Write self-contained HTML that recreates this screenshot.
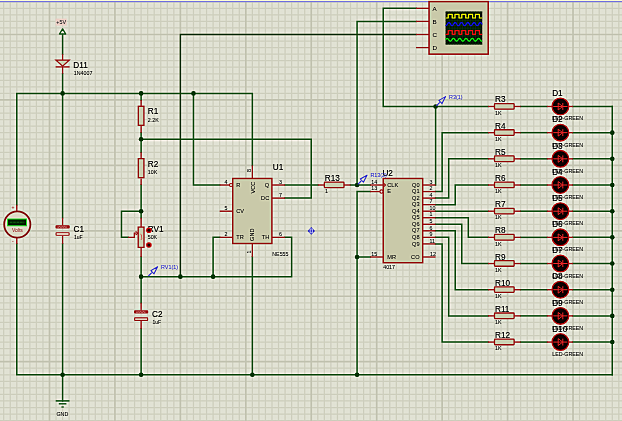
<!DOCTYPE html>
<html><head><meta charset="utf-8"><style>
html,body{margin:0;padding:0;background:#e0e1d3;}
svg{display:block;}
text{font-family:"Liberation Sans", sans-serif;}
.t{opacity:0.999;will-change:transform;}
</style></head><body>
<svg width="622" height="421" viewBox="0 0 622 421" style="will-change:transform">
<defs><filter id="usm" filterUnits="userSpaceOnUse" x="-20" y="-20" width="662" height="461" color-interpolation-filters="sRGB">
<feGaussianBlur in="SourceGraphic" stdDeviation="0.8" result="b"/>
<feComposite in="SourceGraphic" in2="b" operator="arithmetic" k1="0" k2="1.6" k3="-0.6" k4="0"/>
</filter></defs>
<g filter="url(#usm)">
<rect x="-20" y="-20" width="662" height="461" fill="#e0e1d3"/>
<path d="M-35.57 -20V441M-29.03 -20V441M-22.48 -20V441M-9.4 -20V441M-2.85 -20V441M3.69 -20V441M10.24 -20V441M16.78 -20V441M23.32 -20V441M29.87 -20V441M36.41 -20V441M42.96 -20V441M56.04 -20V441M62.59 -20V441M69.13 -20V441M75.68 -20V441M82.22 -20V441M88.76 -20V441M95.31 -20V441M101.85 -20V441M108.4 -20V441M121.48 -20V441M128.03 -20V441M134.57 -20V441M141.12 -20V441M147.66 -20V441M154.2 -20V441M160.75 -20V441M167.29 -20V441M173.84 -20V441M186.92 -20V441M193.47 -20V441M200.01 -20V441M206.56 -20V441M213.1 -20V441M219.64 -20V441M226.19 -20V441M232.73 -20V441M239.28 -20V441M252.36 -20V441M258.91 -20V441M265.45 -20V441M272 -20V441M278.54 -20V441M285.08 -20V441M291.63 -20V441M298.17 -20V441M304.72 -20V441M317.8 -20V441M324.35 -20V441M330.89 -20V441M337.44 -20V441M343.98 -20V441M350.52 -20V441M357.07 -20V441M363.61 -20V441M370.16 -20V441M383.24 -20V441M389.79 -20V441M396.33 -20V441M402.88 -20V441M409.42 -20V441M415.96 -20V441M422.51 -20V441M429.05 -20V441M435.6 -20V441M448.68 -20V441M455.23 -20V441M461.77 -20V441M468.32 -20V441M474.86 -20V441M481.4 -20V441M487.95 -20V441M494.49 -20V441M501.04 -20V441M514.12 -20V441M520.67 -20V441M527.21 -20V441M533.76 -20V441M540.3 -20V441M546.84 -20V441M553.39 -20V441M559.93 -20V441M566.48 -20V441M579.56 -20V441M586.11 -20V441M592.65 -20V441M599.2 -20V441M605.74 -20V441M612.28 -20V441M618.83 -20V441M625.37 -20V441M631.92 -20V441M-20 -37.48H642M-20 -24.4H642M-20 -17.85H642M-20 -11.31H642M-20 -4.76H642M-20 1.78H642M-20 8.32H642M-20 14.87H642M-20 21.41H642M-20 27.96H642M-20 41.04H642M-20 47.59H642M-20 54.13H642M-20 60.68H642M-20 67.22H642M-20 73.76H642M-20 80.31H642M-20 86.85H642M-20 93.4H642M-20 106.48H642M-20 113.03H642M-20 119.57H642M-20 126.12H642M-20 132.66H642M-20 139.2H642M-20 145.75H642M-20 152.29H642M-20 158.84H642M-20 171.92H642M-20 178.47H642M-20 185.01H642M-20 191.56H642M-20 198.1H642M-20 204.64H642M-20 211.19H642M-20 217.73H642M-20 224.28H642M-20 237.36H642M-20 243.91H642M-20 250.45H642M-20 257H642M-20 263.54H642M-20 270.08H642M-20 276.63H642M-20 283.17H642M-20 289.72H642M-20 302.8H642M-20 309.35H642M-20 315.89H642M-20 322.44H642M-20 328.98H642M-20 335.52H642M-20 342.07H642M-20 348.61H642M-20 355.16H642M-20 368.24H642M-20 374.79H642M-20 381.33H642M-20 387.88H642M-20 394.42H642M-20 400.96H642M-20 407.51H642M-20 414.05H642M-20 420.6H642M-20 433.68H642M-20 440.23H642" stroke="#d0d1c0" stroke-width="1.25" fill="none"/>
<path d="M49.5 -20V441M-20 34.5H642M114.94 -20V441M-20 99.94H642M180.38 -20V441M-20 165.38H642M245.82 -20V441M-20 230.82H642M311.26 -20V441M-20 296.26H642M376.7 -20V441M-20 361.7H642M442.14 -20V441M507.58 -20V441M573.02 -20V441" stroke="#c5c6b4" stroke-width="1.7" fill="none"/>
<rect x="-20" y="-20" width="662" height="21" fill="#eeeed6"/>
<rect x="-20" y="1" width="662" height="1.2" fill="#8c8cdc"/>
<path d="M16.78 204.64 L16.78 93.4 L252.36 93.4 L252.36 165.38" stroke="#2c642c" stroke-width="1.5" fill="none" stroke-linejoin="miter" stroke-linecap="square"/>
<path d="M16.78 243.91 L16.78 374.79 L612.28 374.79" stroke="#2c642c" stroke-width="1.5" fill="none" stroke-linejoin="miter" stroke-linecap="square"/>
<path d="M62.59 34.5 L62.59 54.13" stroke="#2c642c" stroke-width="1.5" fill="none" stroke-linejoin="miter" stroke-linecap="square"/>
<path d="M62.59 73.76 L62.59 217.73" stroke="#2c642c" stroke-width="1.5" fill="none" stroke-linejoin="miter" stroke-linecap="square"/>
<path d="M62.59 243.91 L62.59 400.96" stroke="#2c642c" stroke-width="1.5" fill="none" stroke-linejoin="miter" stroke-linecap="square"/>
<path d="M141.12 93.4 L141.12 99.94" stroke="#2c642c" stroke-width="1.5" fill="none" stroke-linejoin="miter" stroke-linecap="square"/>
<path d="M141.12 132.66 L141.12 152.29" stroke="#2c642c" stroke-width="1.5" fill="none" stroke-linejoin="miter" stroke-linecap="square"/>
<path d="M141.12 185.01 L141.12 217.73" stroke="#2c642c" stroke-width="1.5" fill="none" stroke-linejoin="miter" stroke-linecap="square"/>
<path d="M141.12 257 L141.12 302.8" stroke="#2c642c" stroke-width="1.5" fill="none" stroke-linejoin="miter" stroke-linecap="square"/>
<path d="M141.12 328.98 L141.12 374.79" stroke="#2c642c" stroke-width="1.5" fill="none" stroke-linejoin="miter" stroke-linecap="square"/>
<path d="M141.12 139.2 L311.26 139.2 L311.26 198.1 L285.08 198.1" stroke="#2c642c" stroke-width="1.5" fill="none" stroke-linejoin="miter" stroke-linecap="square"/>
<path d="M193.47 93.4 L193.47 185.01 L219.64 185.01" stroke="#2c642c" stroke-width="1.5" fill="none" stroke-linejoin="miter" stroke-linecap="square"/>
<path d="M141.12 211.19 L121.48 211.19 L121.48 237.36 L128.03 237.36" stroke="#2c642c" stroke-width="1.5" fill="none" stroke-linejoin="miter" stroke-linecap="square"/>
<path d="M141.12 276.63 L291.63 276.63 L291.63 237.36 L285.08 237.36" stroke="#2c642c" stroke-width="1.5" fill="none" stroke-linejoin="miter" stroke-linecap="square"/>
<path d="M219.64 237.36 L213.1 237.36 L213.1 276.63" stroke="#2c642c" stroke-width="1.5" fill="none" stroke-linejoin="miter" stroke-linecap="square"/>
<path d="M252.36 257 L252.36 374.79" stroke="#2c642c" stroke-width="1.5" fill="none" stroke-linejoin="miter" stroke-linecap="square"/>
<path d="M285.08 185.01 L317.8 185.01" stroke="#2c642c" stroke-width="1.5" fill="none" stroke-linejoin="miter" stroke-linecap="square"/>
<path d="M350.52 185.01 L370.16 185.01" stroke="#2c642c" stroke-width="1.5" fill="none" stroke-linejoin="miter" stroke-linecap="square"/>
<path d="M415.96 21.41 L357.07 21.41 L357.07 185.01" stroke="#2c642c" stroke-width="1.5" fill="none" stroke-linejoin="miter" stroke-linecap="square"/>
<path d="M370.16 191.56 L357.07 191.56 L357.07 374.79" stroke="#2c642c" stroke-width="1.5" fill="none" stroke-linejoin="miter" stroke-linecap="square"/>
<path d="M357.07 257 L370.16 257" stroke="#2c642c" stroke-width="1.5" fill="none" stroke-linejoin="miter" stroke-linecap="square"/>
<path d="M415.96 8.32 L383.24 8.32 L383.24 106.48 L487.95 106.48" stroke="#2c642c" stroke-width="1.5" fill="none" stroke-linejoin="miter" stroke-linecap="square"/>
<path d="M435.6 185.01 L435.6 106.48" stroke="#2c642c" stroke-width="1.5" fill="none" stroke-linejoin="miter" stroke-linecap="square"/>
<path d="M435.6 191.56 L442.14 191.56 L442.14 132.66 L487.95 132.66" stroke="#2c642c" stroke-width="1.5" fill="none" stroke-linejoin="miter" stroke-linecap="square"/>
<path d="M435.6 198.1 L448.68 198.1 L448.68 158.84 L487.95 158.84" stroke="#2c642c" stroke-width="1.5" fill="none" stroke-linejoin="miter" stroke-linecap="square"/>
<path d="M435.6 204.64 L455.23 204.64 L455.23 185.01 L487.95 185.01" stroke="#2c642c" stroke-width="1.5" fill="none" stroke-linejoin="miter" stroke-linecap="square"/>
<path d="M435.6 211.19 L487.95 211.19" stroke="#2c642c" stroke-width="1.5" fill="none" stroke-linejoin="miter" stroke-linecap="square"/>
<path d="M435.6 217.73 L468.32 217.73 L468.32 237.36 L487.95 237.36" stroke="#2c642c" stroke-width="1.5" fill="none" stroke-linejoin="miter" stroke-linecap="square"/>
<path d="M435.6 224.28 L461.77 224.28 L461.77 263.54 L487.95 263.54" stroke="#2c642c" stroke-width="1.5" fill="none" stroke-linejoin="miter" stroke-linecap="square"/>
<path d="M435.6 230.82 L455.23 230.82 L455.23 289.72 L487.95 289.72" stroke="#2c642c" stroke-width="1.5" fill="none" stroke-linejoin="miter" stroke-linecap="square"/>
<path d="M435.6 237.36 L448.68 237.36 L448.68 315.89 L487.95 315.89" stroke="#2c642c" stroke-width="1.5" fill="none" stroke-linejoin="miter" stroke-linecap="square"/>
<path d="M435.6 243.91 L442.14 243.91 L442.14 342.07 L487.95 342.07" stroke="#2c642c" stroke-width="1.5" fill="none" stroke-linejoin="miter" stroke-linecap="square"/>
<path d="M612.28 106.48 L612.28 374.79" stroke="#2c642c" stroke-width="1.5" fill="none" stroke-linejoin="miter" stroke-linecap="square"/>
<path d="M520.67 106.48 L546.84 106.48" stroke="#2c642c" stroke-width="1.5" fill="none" stroke-linejoin="miter" stroke-linecap="square"/>
<path d="M573.02 106.48 L612.28 106.48" stroke="#2c642c" stroke-width="1.5" fill="none" stroke-linejoin="miter" stroke-linecap="square"/>
<path d="M520.67 132.66 L546.84 132.66" stroke="#2c642c" stroke-width="1.5" fill="none" stroke-linejoin="miter" stroke-linecap="square"/>
<path d="M573.02 132.66 L612.28 132.66" stroke="#2c642c" stroke-width="1.5" fill="none" stroke-linejoin="miter" stroke-linecap="square"/>
<path d="M520.67 158.84 L546.84 158.84" stroke="#2c642c" stroke-width="1.5" fill="none" stroke-linejoin="miter" stroke-linecap="square"/>
<path d="M573.02 158.84 L612.28 158.84" stroke="#2c642c" stroke-width="1.5" fill="none" stroke-linejoin="miter" stroke-linecap="square"/>
<path d="M520.67 185.01 L546.84 185.01" stroke="#2c642c" stroke-width="1.5" fill="none" stroke-linejoin="miter" stroke-linecap="square"/>
<path d="M573.02 185.01 L612.28 185.01" stroke="#2c642c" stroke-width="1.5" fill="none" stroke-linejoin="miter" stroke-linecap="square"/>
<path d="M520.67 211.19 L546.84 211.19" stroke="#2c642c" stroke-width="1.5" fill="none" stroke-linejoin="miter" stroke-linecap="square"/>
<path d="M573.02 211.19 L612.28 211.19" stroke="#2c642c" stroke-width="1.5" fill="none" stroke-linejoin="miter" stroke-linecap="square"/>
<path d="M520.67 237.36 L546.84 237.36" stroke="#2c642c" stroke-width="1.5" fill="none" stroke-linejoin="miter" stroke-linecap="square"/>
<path d="M573.02 237.36 L612.28 237.36" stroke="#2c642c" stroke-width="1.5" fill="none" stroke-linejoin="miter" stroke-linecap="square"/>
<path d="M520.67 263.54 L546.84 263.54" stroke="#2c642c" stroke-width="1.5" fill="none" stroke-linejoin="miter" stroke-linecap="square"/>
<path d="M573.02 263.54 L612.28 263.54" stroke="#2c642c" stroke-width="1.5" fill="none" stroke-linejoin="miter" stroke-linecap="square"/>
<path d="M520.67 289.72 L546.84 289.72" stroke="#2c642c" stroke-width="1.5" fill="none" stroke-linejoin="miter" stroke-linecap="square"/>
<path d="M573.02 289.72 L612.28 289.72" stroke="#2c642c" stroke-width="1.5" fill="none" stroke-linejoin="miter" stroke-linecap="square"/>
<path d="M520.67 315.89 L546.84 315.89" stroke="#2c642c" stroke-width="1.5" fill="none" stroke-linejoin="miter" stroke-linecap="square"/>
<path d="M573.02 315.89 L612.28 315.89" stroke="#2c642c" stroke-width="1.5" fill="none" stroke-linejoin="miter" stroke-linecap="square"/>
<path d="M520.67 342.07 L546.84 342.07" stroke="#2c642c" stroke-width="1.5" fill="none" stroke-linejoin="miter" stroke-linecap="square"/>
<path d="M573.02 342.07 L612.28 342.07" stroke="#2c642c" stroke-width="1.5" fill="none" stroke-linejoin="miter" stroke-linecap="square"/>
<path d="M415.96 34.5 L180.38 34.5 L180.38 276.63" stroke="#2e4d16" stroke-width="1.45" fill="none" stroke-linejoin="miter" stroke-linecap="square"/>
<circle cx="62.59" cy="93.4" r="2.3" fill="#0f3f0f"/>
<circle cx="141.12" cy="93.4" r="2.3" fill="#0f3f0f"/>
<circle cx="193.47" cy="93.4" r="2.3" fill="#0f3f0f"/>
<circle cx="141.12" cy="139.2" r="2.3" fill="#0f3f0f"/>
<circle cx="141.12" cy="211.19" r="2.3" fill="#0f3f0f"/>
<circle cx="141.12" cy="276.63" r="2.3" fill="#0f3f0f"/>
<circle cx="180.38" cy="276.63" r="2.3" fill="#0f3f0f"/>
<circle cx="213.1" cy="276.63" r="2.3" fill="#0f3f0f"/>
<circle cx="357.07" cy="185.01" r="2.3" fill="#0f3f0f"/>
<circle cx="357.07" cy="257" r="2.3" fill="#0f3f0f"/>
<circle cx="435.6" cy="106.48" r="2.3" fill="#0f3f0f"/>
<circle cx="62.59" cy="374.79" r="2.3" fill="#0f3f0f"/>
<circle cx="141.12" cy="374.79" r="2.3" fill="#0f3f0f"/>
<circle cx="252.36" cy="374.79" r="2.3" fill="#0f3f0f"/>
<circle cx="357.07" cy="374.79" r="2.3" fill="#0f3f0f"/>
<circle cx="612.28" cy="132.66" r="2.3" fill="#0f3f0f"/>
<circle cx="612.28" cy="158.84" r="2.3" fill="#0f3f0f"/>
<circle cx="612.28" cy="185.01" r="2.3" fill="#0f3f0f"/>
<circle cx="612.28" cy="211.19" r="2.3" fill="#0f3f0f"/>
<circle cx="612.28" cy="237.36" r="2.3" fill="#0f3f0f"/>
<circle cx="612.28" cy="263.54" r="2.3" fill="#0f3f0f"/>
<circle cx="612.28" cy="289.72" r="2.3" fill="#0f3f0f"/>
<circle cx="612.28" cy="315.89" r="2.3" fill="#0f3f0f"/>
<circle cx="612.28" cy="342.07" r="2.3" fill="#0f3f0f"/>
<path d="M141.12 99.94 L141.12 106.48" stroke="#a02222" stroke-width="1.3" fill="none"/>
<path d="M141.12 126.12 L141.12 132.66" stroke="#a02222" stroke-width="1.3" fill="none"/>
<rect x="138.32" y="106.28" width="5.6" height="19.03" fill="#cacaad" stroke="#a02222" stroke-width="1.3"/>
<text x="147.72" y="114.28" font-size="8.2" fill="#1c1c1c" stroke="#1c1c1c" stroke-width="0.12" text-anchor="start">R1</text>
<text x="147.82" y="121.78" font-size="5.3" fill="#1c1c1c" stroke="#1c1c1c" stroke-width="0.05" text-anchor="start">2.2K</text>
<path d="M141.12 152.29 L141.12 158.84" stroke="#a02222" stroke-width="1.3" fill="none"/>
<path d="M141.12 178.47 L141.12 185.01" stroke="#a02222" stroke-width="1.3" fill="none"/>
<rect x="138.32" y="158.64" width="5.6" height="19.03" fill="#cacaad" stroke="#a02222" stroke-width="1.3"/>
<text x="147.72" y="166.64" font-size="8.2" fill="#1c1c1c" stroke="#1c1c1c" stroke-width="0.12" text-anchor="start">R2</text>
<text x="147.82" y="174.14" font-size="5.3" fill="#1c1c1c" stroke="#1c1c1c" stroke-width="0.05" text-anchor="start">10K</text>
<path d="M317.8 185.01 L324.35 185.01" stroke="#a02222" stroke-width="1.3" fill="none"/>
<path d="M343.98 185.01 L350.52 185.01" stroke="#a02222" stroke-width="1.3" fill="none"/>
<rect x="324.35" y="182.11" width="19.63" height="5.6" rx="0.8" fill="#cacaad" stroke="#a02222" stroke-width="1.3"/>
<text x="324.85" y="181.01" font-size="8.2" fill="#1c1c1c" stroke="#1c1c1c" stroke-width="0.12" text-anchor="start">R13</text>
<text x="324.95" y="193.31" font-size="5.3" fill="#1c1c1c" stroke="#1c1c1c" stroke-width="0.05" text-anchor="start">1</text>
<path d="M487.95 106.48 L494.49 106.48" stroke="#a02222" stroke-width="1.3" fill="none"/>
<path d="M514.12 106.48 L520.67 106.48" stroke="#a02222" stroke-width="1.3" fill="none"/>
<rect x="494.49" y="103.58" width="19.63" height="5.6" rx="0.8" fill="#cacaad" stroke="#a02222" stroke-width="1.3"/>
<text x="494.99" y="102.48" font-size="8.2" fill="#1c1c1c" stroke="#1c1c1c" stroke-width="0.12" text-anchor="start">R3</text>
<text x="495.09" y="114.78" font-size="5.3" fill="#1c1c1c" stroke="#1c1c1c" stroke-width="0.05" text-anchor="start">1K</text>
<path d="M487.95 132.66 L494.49 132.66" stroke="#a02222" stroke-width="1.3" fill="none"/>
<path d="M514.12 132.66 L520.67 132.66" stroke="#a02222" stroke-width="1.3" fill="none"/>
<rect x="494.49" y="129.76" width="19.63" height="5.6" rx="0.8" fill="#cacaad" stroke="#a02222" stroke-width="1.3"/>
<text x="494.99" y="128.66" font-size="8.2" fill="#1c1c1c" stroke="#1c1c1c" stroke-width="0.12" text-anchor="start">R4</text>
<text x="495.09" y="140.96" font-size="5.3" fill="#1c1c1c" stroke="#1c1c1c" stroke-width="0.05" text-anchor="start">1K</text>
<path d="M487.95 158.84 L494.49 158.84" stroke="#a02222" stroke-width="1.3" fill="none"/>
<path d="M514.12 158.84 L520.67 158.84" stroke="#a02222" stroke-width="1.3" fill="none"/>
<rect x="494.49" y="155.94" width="19.63" height="5.6" rx="0.8" fill="#cacaad" stroke="#a02222" stroke-width="1.3"/>
<text x="494.99" y="154.84" font-size="8.2" fill="#1c1c1c" stroke="#1c1c1c" stroke-width="0.12" text-anchor="start">R5</text>
<text x="495.09" y="167.14" font-size="5.3" fill="#1c1c1c" stroke="#1c1c1c" stroke-width="0.05" text-anchor="start">1K</text>
<path d="M487.95 185.01 L494.49 185.01" stroke="#a02222" stroke-width="1.3" fill="none"/>
<path d="M514.12 185.01 L520.67 185.01" stroke="#a02222" stroke-width="1.3" fill="none"/>
<rect x="494.49" y="182.11" width="19.63" height="5.6" rx="0.8" fill="#cacaad" stroke="#a02222" stroke-width="1.3"/>
<text x="494.99" y="181.01" font-size="8.2" fill="#1c1c1c" stroke="#1c1c1c" stroke-width="0.12" text-anchor="start">R6</text>
<text x="495.09" y="193.31" font-size="5.3" fill="#1c1c1c" stroke="#1c1c1c" stroke-width="0.05" text-anchor="start">1K</text>
<path d="M487.95 211.19 L494.49 211.19" stroke="#a02222" stroke-width="1.3" fill="none"/>
<path d="M514.12 211.19 L520.67 211.19" stroke="#a02222" stroke-width="1.3" fill="none"/>
<rect x="494.49" y="208.29" width="19.63" height="5.6" rx="0.8" fill="#cacaad" stroke="#a02222" stroke-width="1.3"/>
<text x="494.99" y="207.19" font-size="8.2" fill="#1c1c1c" stroke="#1c1c1c" stroke-width="0.12" text-anchor="start">R7</text>
<text x="495.09" y="219.49" font-size="5.3" fill="#1c1c1c" stroke="#1c1c1c" stroke-width="0.05" text-anchor="start">1K</text>
<path d="M487.95 237.36 L494.49 237.36" stroke="#a02222" stroke-width="1.3" fill="none"/>
<path d="M514.12 237.36 L520.67 237.36" stroke="#a02222" stroke-width="1.3" fill="none"/>
<rect x="494.49" y="234.46" width="19.63" height="5.6" rx="0.8" fill="#cacaad" stroke="#a02222" stroke-width="1.3"/>
<text x="494.99" y="233.36" font-size="8.2" fill="#1c1c1c" stroke="#1c1c1c" stroke-width="0.12" text-anchor="start">R8</text>
<text x="495.09" y="245.66" font-size="5.3" fill="#1c1c1c" stroke="#1c1c1c" stroke-width="0.05" text-anchor="start">1K</text>
<path d="M487.95 263.54 L494.49 263.54" stroke="#a02222" stroke-width="1.3" fill="none"/>
<path d="M514.12 263.54 L520.67 263.54" stroke="#a02222" stroke-width="1.3" fill="none"/>
<rect x="494.49" y="260.64" width="19.63" height="5.6" rx="0.8" fill="#cacaad" stroke="#a02222" stroke-width="1.3"/>
<text x="494.99" y="259.54" font-size="8.2" fill="#1c1c1c" stroke="#1c1c1c" stroke-width="0.12" text-anchor="start">R9</text>
<text x="495.09" y="271.84" font-size="5.3" fill="#1c1c1c" stroke="#1c1c1c" stroke-width="0.05" text-anchor="start">1K</text>
<path d="M487.95 289.72 L494.49 289.72" stroke="#a02222" stroke-width="1.3" fill="none"/>
<path d="M514.12 289.72 L520.67 289.72" stroke="#a02222" stroke-width="1.3" fill="none"/>
<rect x="494.49" y="286.82" width="19.63" height="5.6" rx="0.8" fill="#cacaad" stroke="#a02222" stroke-width="1.3"/>
<text x="494.99" y="285.72" font-size="8.2" fill="#1c1c1c" stroke="#1c1c1c" stroke-width="0.12" text-anchor="start">R10</text>
<text x="495.09" y="298.02" font-size="5.3" fill="#1c1c1c" stroke="#1c1c1c" stroke-width="0.05" text-anchor="start">1K</text>
<path d="M487.95 315.89 L494.49 315.89" stroke="#a02222" stroke-width="1.3" fill="none"/>
<path d="M514.12 315.89 L520.67 315.89" stroke="#a02222" stroke-width="1.3" fill="none"/>
<rect x="494.49" y="312.99" width="19.63" height="5.6" rx="0.8" fill="#cacaad" stroke="#a02222" stroke-width="1.3"/>
<text x="494.99" y="311.89" font-size="8.2" fill="#1c1c1c" stroke="#1c1c1c" stroke-width="0.12" text-anchor="start">R11</text>
<text x="495.09" y="324.19" font-size="5.3" fill="#1c1c1c" stroke="#1c1c1c" stroke-width="0.05" text-anchor="start">1K</text>
<path d="M487.95 342.07 L494.49 342.07" stroke="#a02222" stroke-width="1.3" fill="none"/>
<path d="M514.12 342.07 L520.67 342.07" stroke="#a02222" stroke-width="1.3" fill="none"/>
<rect x="494.49" y="339.17" width="19.63" height="5.6" rx="0.8" fill="#cacaad" stroke="#a02222" stroke-width="1.3"/>
<text x="494.99" y="338.07" font-size="8.2" fill="#1c1c1c" stroke="#1c1c1c" stroke-width="0.12" text-anchor="start">R12</text>
<text x="495.09" y="350.37" font-size="5.3" fill="#1c1c1c" stroke="#1c1c1c" stroke-width="0.05" text-anchor="start">1K</text>
<path d="M546.84 106.48 L552.4 106.48" stroke="#a02222" stroke-width="1.3" fill="none"/>
<path d="M568.4 106.48 L573.02 106.48" stroke="#a02222" stroke-width="1.3" fill="none"/>
<circle cx="560.4" cy="106.48" r="8.35" fill="#140202" stroke="#b01a1a" stroke-width="1.3"/>
<path d="M553.2 106.48 H567.6 M558.2 103.08 V109.88 L562.8 106.48 Z M562.8 103.08 V109.88" stroke="#cc2222" stroke-width="1.0" fill="none"/>
<path d="M546.84 132.66 L552.4 132.66" stroke="#a02222" stroke-width="1.3" fill="none"/>
<path d="M568.4 132.66 L573.02 132.66" stroke="#a02222" stroke-width="1.3" fill="none"/>
<circle cx="560.4" cy="132.66" r="8.35" fill="#140202" stroke="#b01a1a" stroke-width="1.3"/>
<path d="M553.2 132.66 H567.6 M558.2 129.26 V136.06 L562.8 132.66 Z M562.8 129.26 V136.06" stroke="#cc2222" stroke-width="1.0" fill="none"/>
<path d="M546.84 158.84 L552.4 158.84" stroke="#a02222" stroke-width="1.3" fill="none"/>
<path d="M568.4 158.84 L573.02 158.84" stroke="#a02222" stroke-width="1.3" fill="none"/>
<circle cx="560.4" cy="158.84" r="8.35" fill="#140202" stroke="#b01a1a" stroke-width="1.3"/>
<path d="M553.2 158.84 H567.6 M558.2 155.44 V162.24 L562.8 158.84 Z M562.8 155.44 V162.24" stroke="#cc2222" stroke-width="1.0" fill="none"/>
<path d="M546.84 185.01 L552.4 185.01" stroke="#a02222" stroke-width="1.3" fill="none"/>
<path d="M568.4 185.01 L573.02 185.01" stroke="#a02222" stroke-width="1.3" fill="none"/>
<circle cx="560.4" cy="185.01" r="8.35" fill="#140202" stroke="#b01a1a" stroke-width="1.3"/>
<path d="M553.2 185.01 H567.6 M558.2 181.61 V188.41 L562.8 185.01 Z M562.8 181.61 V188.41" stroke="#cc2222" stroke-width="1.0" fill="none"/>
<path d="M546.84 211.19 L552.4 211.19" stroke="#a02222" stroke-width="1.3" fill="none"/>
<path d="M568.4 211.19 L573.02 211.19" stroke="#a02222" stroke-width="1.3" fill="none"/>
<circle cx="560.4" cy="211.19" r="8.35" fill="#140202" stroke="#b01a1a" stroke-width="1.3"/>
<path d="M553.2 211.19 H567.6 M558.2 207.79 V214.59 L562.8 211.19 Z M562.8 207.79 V214.59" stroke="#cc2222" stroke-width="1.0" fill="none"/>
<path d="M546.84 237.36 L552.4 237.36" stroke="#a02222" stroke-width="1.3" fill="none"/>
<path d="M568.4 237.36 L573.02 237.36" stroke="#a02222" stroke-width="1.3" fill="none"/>
<circle cx="560.4" cy="237.36" r="8.35" fill="#140202" stroke="#b01a1a" stroke-width="1.3"/>
<path d="M553.2 237.36 H567.6 M558.2 233.96 V240.76 L562.8 237.36 Z M562.8 233.96 V240.76" stroke="#cc2222" stroke-width="1.0" fill="none"/>
<path d="M546.84 263.54 L552.4 263.54" stroke="#a02222" stroke-width="1.3" fill="none"/>
<path d="M568.4 263.54 L573.02 263.54" stroke="#a02222" stroke-width="1.3" fill="none"/>
<circle cx="560.4" cy="263.54" r="8.35" fill="#140202" stroke="#b01a1a" stroke-width="1.3"/>
<path d="M553.2 263.54 H567.6 M558.2 260.14 V266.94 L562.8 263.54 Z M562.8 260.14 V266.94" stroke="#cc2222" stroke-width="1.0" fill="none"/>
<path d="M546.84 289.72 L552.4 289.72" stroke="#a02222" stroke-width="1.3" fill="none"/>
<path d="M568.4 289.72 L573.02 289.72" stroke="#a02222" stroke-width="1.3" fill="none"/>
<circle cx="560.4" cy="289.72" r="8.35" fill="#140202" stroke="#b01a1a" stroke-width="1.3"/>
<path d="M553.2 289.72 H567.6 M558.2 286.32 V293.12 L562.8 289.72 Z M562.8 286.32 V293.12" stroke="#cc2222" stroke-width="1.0" fill="none"/>
<path d="M546.84 315.89 L552.4 315.89" stroke="#a02222" stroke-width="1.3" fill="none"/>
<path d="M568.4 315.89 L573.02 315.89" stroke="#a02222" stroke-width="1.3" fill="none"/>
<circle cx="560.4" cy="315.89" r="8.35" fill="#140202" stroke="#b01a1a" stroke-width="1.3"/>
<path d="M553.2 315.89 H567.6 M558.2 312.49 V319.29 L562.8 315.89 Z M562.8 312.49 V319.29" stroke="#cc2222" stroke-width="1.0" fill="none"/>
<path d="M546.84 342.07 L552.4 342.07" stroke="#a02222" stroke-width="1.3" fill="none"/>
<path d="M568.4 342.07 L573.02 342.07" stroke="#a02222" stroke-width="1.3" fill="none"/>
<circle cx="560.4" cy="342.07" r="8.35" fill="#140202" stroke="#b01a1a" stroke-width="1.3"/>
<path d="M553.2 342.07 H567.6 M558.2 338.67 V345.47 L562.8 342.07 Z M562.8 338.67 V345.47" stroke="#cc2222" stroke-width="1.0" fill="none"/>
<text x="552.2" y="96.18" font-size="8.2" fill="#1c1c1c" stroke="#1c1c1c" stroke-width="0.12" text-anchor="start">D1</text>
<text x="552.2" y="120.48" font-size="5.3" fill="#1c1c1c" stroke="#1c1c1c" stroke-width="0.05" text-anchor="start">LED-GREEN</text>
<text x="552.2" y="122.36" font-size="8.2" fill="#1c1c1c" stroke="#1c1c1c" stroke-width="0.12" text-anchor="start">D2</text>
<text x="552.2" y="146.66" font-size="5.3" fill="#1c1c1c" stroke="#1c1c1c" stroke-width="0.05" text-anchor="start">LED-GREEN</text>
<text x="552.2" y="148.54" font-size="8.2" fill="#1c1c1c" stroke="#1c1c1c" stroke-width="0.12" text-anchor="start">D3</text>
<text x="552.2" y="172.84" font-size="5.3" fill="#1c1c1c" stroke="#1c1c1c" stroke-width="0.05" text-anchor="start">LED-GREEN</text>
<text x="552.2" y="174.71" font-size="8.2" fill="#1c1c1c" stroke="#1c1c1c" stroke-width="0.12" text-anchor="start">D4</text>
<text x="552.2" y="199.01" font-size="5.3" fill="#1c1c1c" stroke="#1c1c1c" stroke-width="0.05" text-anchor="start">LED-GREEN</text>
<text x="552.2" y="200.89" font-size="8.2" fill="#1c1c1c" stroke="#1c1c1c" stroke-width="0.12" text-anchor="start">D5</text>
<text x="552.2" y="225.19" font-size="5.3" fill="#1c1c1c" stroke="#1c1c1c" stroke-width="0.05" text-anchor="start">LED-GREEN</text>
<text x="552.2" y="227.06" font-size="8.2" fill="#1c1c1c" stroke="#1c1c1c" stroke-width="0.12" text-anchor="start">D6</text>
<text x="552.2" y="251.36" font-size="5.3" fill="#1c1c1c" stroke="#1c1c1c" stroke-width="0.05" text-anchor="start">LED-GREEN</text>
<text x="552.2" y="253.24" font-size="8.2" fill="#1c1c1c" stroke="#1c1c1c" stroke-width="0.12" text-anchor="start">D7</text>
<text x="552.2" y="277.54" font-size="5.3" fill="#1c1c1c" stroke="#1c1c1c" stroke-width="0.05" text-anchor="start">LED-GREEN</text>
<text x="552.2" y="279.42" font-size="8.2" fill="#1c1c1c" stroke="#1c1c1c" stroke-width="0.12" text-anchor="start">D8</text>
<text x="552.2" y="303.72" font-size="5.3" fill="#1c1c1c" stroke="#1c1c1c" stroke-width="0.05" text-anchor="start">LED-GREEN</text>
<text x="552.2" y="305.59" font-size="8.2" fill="#1c1c1c" stroke="#1c1c1c" stroke-width="0.12" text-anchor="start">D9</text>
<text x="552.2" y="329.89" font-size="5.3" fill="#1c1c1c" stroke="#1c1c1c" stroke-width="0.05" text-anchor="start">LED-GREEN</text>
<text x="552.2" y="331.77" font-size="8.2" fill="#1c1c1c" stroke="#1c1c1c" stroke-width="0.12" text-anchor="start">D10</text>
<text x="552.2" y="356.07" font-size="5.3" fill="#1c1c1c" stroke="#1c1c1c" stroke-width="0.05" text-anchor="start">LED-GREEN</text>
<path d="M252.36 165.38 L252.36 178.47" stroke="#a02222" stroke-width="1.3" fill="none"/>
<path d="M252.36 243.5 L252.36 257" stroke="#a02222" stroke-width="1.3" fill="none"/>
<path d="M219.64 185.01 L229.4 185.01" stroke="#a02222" stroke-width="1.3" fill="none"/>
<circle cx="231.0" cy="185.01" r="1.55" fill="#e0e1d3" stroke="#a02222" stroke-width="1.1"/>
<path d="M219.64 211.19 L232.73 211.19" stroke="#a02222" stroke-width="1.3" fill="none"/>
<path d="M219.64 237.36 L232.73 237.36" stroke="#a02222" stroke-width="1.3" fill="none"/>
<path d="M271.9 185.01 L285.08 185.01" stroke="#a02222" stroke-width="1.3" fill="none"/>
<path d="M271.9 198.1 L285.08 198.1" stroke="#a02222" stroke-width="1.3" fill="none"/>
<path d="M271.9 237.36 L285.08 237.36" stroke="#a02222" stroke-width="1.3" fill="none"/>
<rect x="232.73" y="178.47" width="39.17" height="65.03" fill="#c9c9a9" stroke="#a02222" stroke-width="1.4"/>
<text x="236.3" y="187.11" font-size="5.6" fill="#1c1c1c" stroke="#1c1c1c" stroke-width="0.05" text-anchor="start">R</text>
<text x="269.2" y="187.11" font-size="5.6" fill="#1c1c1c" stroke="#1c1c1c" stroke-width="0.05" text-anchor="end">Q</text>
<text x="269.2" y="200.2" font-size="5.6" fill="#1c1c1c" stroke="#1c1c1c" stroke-width="0.05" text-anchor="end">DC</text>
<text x="236.3" y="213.29" font-size="5.6" fill="#1c1c1c" stroke="#1c1c1c" stroke-width="0.05" text-anchor="start">CV</text>
<text x="236.3" y="239.46" font-size="5.6" fill="#1c1c1c" stroke="#1c1c1c" stroke-width="0.05" text-anchor="start">TR</text>
<text x="269.2" y="239.46" font-size="5.6" fill="#1c1c1c" stroke="#1c1c1c" stroke-width="0.05" text-anchor="end">TH</text>
<text x="254.5" y="187.5" font-size="5.6" fill="#1c1c1c" stroke="#1c1c1c" stroke-width="0.05" text-anchor="middle" transform="rotate(-90 254.5 187.5)">VCC</text>
<text x="254.5" y="234.7" font-size="5.6" fill="#1c1c1c" stroke="#1c1c1c" stroke-width="0.05" text-anchor="middle" transform="rotate(-90 254.5 234.7)">GND</text>
<text x="226" y="183.91" font-size="5.3" fill="#1c1c1c" stroke="#1c1c1c" stroke-width="0.05" text-anchor="middle">4</text>
<text x="226" y="210.09" font-size="5.3" fill="#1c1c1c" stroke="#1c1c1c" stroke-width="0.05" text-anchor="middle">5</text>
<text x="226" y="236.26" font-size="5.3" fill="#1c1c1c" stroke="#1c1c1c" stroke-width="0.05" text-anchor="middle">2</text>
<text x="280.5" y="183.91" font-size="5.3" fill="#1c1c1c" stroke="#1c1c1c" stroke-width="0.05" text-anchor="middle">3</text>
<text x="280.5" y="197" font-size="5.3" fill="#1c1c1c" stroke="#1c1c1c" stroke-width="0.05" text-anchor="middle">7</text>
<text x="280.5" y="236.26" font-size="5.3" fill="#1c1c1c" stroke="#1c1c1c" stroke-width="0.05" text-anchor="middle">6</text>
<text x="251" y="170.5" font-size="5.3" fill="#1c1c1c" stroke="#1c1c1c" stroke-width="0.05" text-anchor="middle" transform="rotate(-90 251.0 170.5)">8</text>
<text x="251" y="252" font-size="5.3" fill="#1c1c1c" stroke="#1c1c1c" stroke-width="0.05" text-anchor="middle" transform="rotate(-90 251.0 252.0)">1</text>
<text x="272.8" y="170.2" font-size="8.2" fill="#1c1c1c" stroke="#1c1c1c" stroke-width="0.12" text-anchor="start">U1</text>
<text x="272.3" y="256.2" font-size="5.3" fill="#1c1c1c" stroke="#1c1c1c" stroke-width="0.05" text-anchor="start">NE555</text>
<path d="M370.16 185.01 L383.24 185.01" stroke="#a02222" stroke-width="1.3" fill="none"/>
<path d="M370.16 191.56 L379.84 191.56" stroke="#a02222" stroke-width="1.3" fill="none"/>
<path d="M370.16 257 L383.24 257" stroke="#a02222" stroke-width="1.3" fill="none"/>
<path d="M422.7 185.01 L435.6 185.01" stroke="#a02222" stroke-width="1.3" fill="none"/>
<path d="M422.7 191.56 L435.6 191.56" stroke="#a02222" stroke-width="1.3" fill="none"/>
<path d="M422.7 198.1 L435.6 198.1" stroke="#a02222" stroke-width="1.3" fill="none"/>
<path d="M422.7 204.64 L435.6 204.64" stroke="#a02222" stroke-width="1.3" fill="none"/>
<path d="M422.7 211.19 L435.6 211.19" stroke="#a02222" stroke-width="1.3" fill="none"/>
<path d="M422.7 217.73 L435.6 217.73" stroke="#a02222" stroke-width="1.3" fill="none"/>
<path d="M422.7 224.28 L435.6 224.28" stroke="#a02222" stroke-width="1.3" fill="none"/>
<path d="M422.7 230.82 L435.6 230.82" stroke="#a02222" stroke-width="1.3" fill="none"/>
<path d="M422.7 237.36 L435.6 237.36" stroke="#a02222" stroke-width="1.3" fill="none"/>
<path d="M422.7 243.91 L435.6 243.91" stroke="#a02222" stroke-width="1.3" fill="none"/>
<path d="M422.7 257 L435.6 257" stroke="#a02222" stroke-width="1.3" fill="none"/>
<circle cx="381.54" cy="191.56" r="1.65" fill="#e0e1d3" stroke="#a02222" stroke-width="1.1"/>
<rect x="383.24" y="178.47" width="39.46" height="84.23" fill="#c9c9a9" stroke="#a02222" stroke-width="1.4"/>
<path d="M383.24 183.01 L385.54 185.01 L383.24 187.01" stroke="#a02222" stroke-width="1.1" fill="none"/>
<text x="387.3" y="186.61" font-size="5.6" fill="#1c1c1c" stroke="#1c1c1c" stroke-width="0.05" text-anchor="start">CLK</text>
<text x="387.3" y="193.16" font-size="5.6" fill="#1c1c1c" stroke="#1c1c1c" stroke-width="0.05" text-anchor="start">E</text>
<text x="387.3" y="258.6" font-size="5.6" fill="#1c1c1c" stroke="#1c1c1c" stroke-width="0.05" text-anchor="start">MR</text>
<text x="419.5" y="258.6" font-size="5.6" fill="#1c1c1c" stroke="#1c1c1c" stroke-width="0.05" text-anchor="end">CO</text>
<text x="419.5" y="186.61" font-size="5.6" fill="#1c1c1c" stroke="#1c1c1c" stroke-width="0.05" text-anchor="end">Q0</text>
<text x="429.5" y="183.71" font-size="5.3" fill="#1c1c1c" stroke="#1c1c1c" stroke-width="0.05" text-anchor="start">3</text>
<text x="419.5" y="193.16" font-size="5.6" fill="#1c1c1c" stroke="#1c1c1c" stroke-width="0.05" text-anchor="end">Q1</text>
<text x="429.5" y="190.26" font-size="5.3" fill="#1c1c1c" stroke="#1c1c1c" stroke-width="0.05" text-anchor="start">2</text>
<text x="419.5" y="199.7" font-size="5.6" fill="#1c1c1c" stroke="#1c1c1c" stroke-width="0.05" text-anchor="end">Q2</text>
<text x="429.5" y="196.8" font-size="5.3" fill="#1c1c1c" stroke="#1c1c1c" stroke-width="0.05" text-anchor="start">4</text>
<text x="419.5" y="206.24" font-size="5.6" fill="#1c1c1c" stroke="#1c1c1c" stroke-width="0.05" text-anchor="end">Q3</text>
<text x="429.5" y="203.34" font-size="5.3" fill="#1c1c1c" stroke="#1c1c1c" stroke-width="0.05" text-anchor="start">7</text>
<text x="419.5" y="212.79" font-size="5.6" fill="#1c1c1c" stroke="#1c1c1c" stroke-width="0.05" text-anchor="end">Q4</text>
<text x="429.5" y="209.89" font-size="5.3" fill="#1c1c1c" stroke="#1c1c1c" stroke-width="0.05" text-anchor="start">10</text>
<text x="419.5" y="219.33" font-size="5.6" fill="#1c1c1c" stroke="#1c1c1c" stroke-width="0.05" text-anchor="end">Q5</text>
<text x="429.5" y="216.43" font-size="5.3" fill="#1c1c1c" stroke="#1c1c1c" stroke-width="0.05" text-anchor="start">1</text>
<text x="419.5" y="225.88" font-size="5.6" fill="#1c1c1c" stroke="#1c1c1c" stroke-width="0.05" text-anchor="end">Q6</text>
<text x="429.5" y="222.98" font-size="5.3" fill="#1c1c1c" stroke="#1c1c1c" stroke-width="0.05" text-anchor="start">5</text>
<text x="419.5" y="232.42" font-size="5.6" fill="#1c1c1c" stroke="#1c1c1c" stroke-width="0.05" text-anchor="end">Q7</text>
<text x="429.5" y="229.52" font-size="5.3" fill="#1c1c1c" stroke="#1c1c1c" stroke-width="0.05" text-anchor="start">6</text>
<text x="419.5" y="238.96" font-size="5.6" fill="#1c1c1c" stroke="#1c1c1c" stroke-width="0.05" text-anchor="end">Q8</text>
<text x="429.5" y="236.06" font-size="5.3" fill="#1c1c1c" stroke="#1c1c1c" stroke-width="0.05" text-anchor="start">9</text>
<text x="419.5" y="245.51" font-size="5.6" fill="#1c1c1c" stroke="#1c1c1c" stroke-width="0.05" text-anchor="end">Q9</text>
<text x="429.5" y="242.61" font-size="5.3" fill="#1c1c1c" stroke="#1c1c1c" stroke-width="0.05" text-anchor="start">11</text>
<text x="371.3" y="183.71" font-size="5.3" fill="#1c1c1c" stroke="#1c1c1c" stroke-width="0.05" text-anchor="start">14</text>
<text x="371.3" y="190.26" font-size="5.3" fill="#1c1c1c" stroke="#1c1c1c" stroke-width="0.05" text-anchor="start">13</text>
<text x="371.3" y="255.7" font-size="5.3" fill="#1c1c1c" stroke="#1c1c1c" stroke-width="0.05" text-anchor="start">15</text>
<text x="430" y="255.7" font-size="5.3" fill="#1c1c1c" stroke="#1c1c1c" stroke-width="0.05" text-anchor="start">12</text>
<text x="382.4" y="175.7" font-size="8.2" fill="#1c1c1c" stroke="#1c1c1c" stroke-width="0.12" text-anchor="start">U2</text>
<text x="383.2" y="269.3" font-size="5.3" fill="#1c1c1c" stroke="#1c1c1c" stroke-width="0.05" text-anchor="start">4017</text>
<path d="M415.96 8.32 L429.05 8.32" stroke="#a02222" stroke-width="1.3" fill="none"/>
<path d="M415.96 21.41 L429.05 21.41" stroke="#a02222" stroke-width="1.3" fill="none"/>
<path d="M415.96 34.5 L429.05 34.5" stroke="#a02222" stroke-width="1.3" fill="none"/>
<path d="M415.96 47.59 L429.05 47.59" stroke="#a02222" stroke-width="1.3" fill="none"/>
<rect x="429.05" y="1.6" width="59.15" height="52.53" fill="#c9c9a9" stroke="#a02222" stroke-width="1.5"/>
<text x="432.4" y="10.72" font-size="6.2" fill="#1c1c1c" stroke="#1c1c1c" stroke-width="0.05" text-anchor="start">A</text>
<text x="432.4" y="23.81" font-size="6.2" fill="#1c1c1c" stroke="#1c1c1c" stroke-width="0.05" text-anchor="start">B</text>
<text x="432.4" y="36.9" font-size="6.2" fill="#1c1c1c" stroke="#1c1c1c" stroke-width="0.05" text-anchor="start">C</text>
<text x="432.4" y="49.99" font-size="6.2" fill="#1c1c1c" stroke="#1c1c1c" stroke-width="0.05" text-anchor="start">D</text>
<rect x="445.4" y="11.2" width="36.9" height="33.6" fill="#061606" stroke="#b8b898" stroke-width="0.4"/>
<path d="M447 11.4V44.6M449.6 11.4V44.6M452.2 11.4V44.6M454.8 11.4V44.6M457.4 11.4V44.6M460 11.4V44.6M462.6 11.4V44.6M465.2 11.4V44.6M467.8 11.4V44.6M470.4 11.4V44.6M473 11.4V44.6M475.6 11.4V44.6M478.2 11.4V44.6M480.8 11.4V44.6M445.6 12.6H482.2M445.6 15.2H482.2M445.6 17.8H482.2M445.6 20.4H482.2M445.6 23H482.2M445.6 25.6H482.2M445.6 28.2H482.2M445.6 30.8H482.2M445.6 33.4H482.2M445.6 36H482.2M445.6 38.6H482.2M445.6 41.2H482.2M445.6 43.8H482.2" stroke="#123a12" stroke-width="0.5" fill="none"/>
<path d="M445.6 18 H448.2 V14.4 H452.2 V18 H455 V14.4 H459 V18 H461.8 V14.4 H465.8 V18 H468.6 V14.4 H472.6 V18 H475.4 V14.4 H479.4 V18 H482.2" stroke="#e8e800" stroke-width="1.2" fill="none" stroke-linejoin="round"/>
<path d="M445.6 25.68 L445.91 25.68 L446.21 25.53 L446.52 25.26 L446.82 24.87 L447.12 24.42 L447.43 23.93 L447.74 23.46 L448.04 23.05 L448.35 22.74 L448.65 22.55 L448.96 22.5 L449.26 22.6 L449.56 22.84 L449.87 23.19 L450.18 23.63 L450.48 24.11 L450.79 24.59 L451.09 25.02 L451.4 25.37 L451.7 25.6 L452 25.7 L452.31 25.65 L452.62 25.45 L452.92 25.13 L453.23 24.72 L453.53 24.25 L453.84 23.77 L454.14 23.31 L454.44 22.93 L454.75 22.66 L455.06 22.52 L455.36 22.52 L455.67 22.67 L455.97 22.95 L456.28 23.33 L456.58 23.79 L456.88 24.28 L457.19 24.74 L457.5 25.15 L457.8 25.47 L458.11 25.65 L458.41 25.7 L458.72 25.6 L459.02 25.36 L459.32 25 L459.63 24.56 L459.94 24.08 L460.24 23.61 L460.55 23.17 L460.85 22.82 L461.16 22.59 L461.46 22.5 L461.76 22.56 L462.07 22.75 L462.38 23.07 L462.68 23.49 L462.99 23.96 L463.29 24.44 L463.6 24.89 L463.9 25.27 L464.2 25.54 L464.51 25.68 L464.81 25.68 L465.12 25.53 L465.43 25.25 L465.73 24.86 L466.04 24.4 L466.34 23.92 L466.64 23.45 L466.95 23.04 L467.25 22.73 L467.56 22.55 L467.87 22.5 L468.17 22.61 L468.48 22.85 L468.78 23.21 L469.08 23.64 L469.39 24.12 L469.69 24.6 L470 25.03 L470.31 25.38 L470.61 25.61 L470.92 25.7 L471.22 25.64 L471.52 25.44 L471.83 25.12 L472.13 24.71 L472.44 24.24 L472.75 23.75 L473.05 23.3 L473.36 22.92 L473.66 22.65 L473.96 22.51 L474.27 22.52 L474.57 22.68 L474.88 22.96 L475.19 23.35 L475.49 23.81 L475.8 24.29 L476.1 24.76 L476.4 25.16 L476.71 25.47 L477.01 25.66 L477.32 25.7 L477.62 25.59 L477.93 25.35 L478.24 24.99 L478.54 24.55 L478.84 24.07 L479.15 23.59 L479.45 23.16 L479.76 22.82 L480.06 22.59 L480.37 22.5 L480.68 22.56 L480.98 22.76 L481.28 23.08 L481.59 23.5 L481.89 23.97 L482.2 24.46" stroke="#1010f8" stroke-width="1.2" fill="none"/>
<path d="M445.6 34.3 H448.2 V30.7 H452.2 V34.3 H455 V30.7 H459 V34.3 H461.8 V30.7 H465.8 V34.3 H468.6 V30.7 H472.6 V34.3 H475.4 V30.7 H479.4 V34.3 H482.2" stroke="#f01010" stroke-width="1.2" fill="none" stroke-linejoin="round"/>
<path d="M445.6 39.65 L445.91 39.25 L446.21 38.9 L446.52 38.62 L446.82 38.45 L447.12 38.4 L447.43 38.47 L447.74 38.66 L448.04 38.95 L448.35 39.31 L448.65 39.72 L448.96 40.12 L449.26 40.49 L449.56 40.8 L449.87 41 L450.18 41.1 L450.48 41.06 L450.79 40.91 L451.09 40.65 L451.4 40.31 L451.7 39.92 L452 39.51 L452.31 39.12 L452.62 38.79 L452.92 38.55 L453.23 38.42 L453.53 38.41 L453.84 38.53 L454.14 38.75 L454.44 39.07 L454.75 39.45 L455.06 39.86 L455.36 40.26 L455.67 40.61 L455.97 40.88 L456.28 41.05 L456.58 41.1 L456.88 41.03 L457.19 40.83 L457.5 40.54 L457.8 40.18 L458.11 39.78 L458.41 39.37 L458.72 39 L459.02 38.7 L459.32 38.49 L459.63 38.4 L459.94 38.44 L460.24 38.59 L460.55 38.85 L460.85 39.19 L461.16 39.59 L461.46 40 L461.76 40.38 L462.07 40.71 L462.38 40.95 L462.68 41.08 L462.99 41.09 L463.29 40.97 L463.6 40.74 L463.9 40.42 L464.2 40.04 L464.51 39.64 L464.81 39.24 L465.12 38.89 L465.43 38.62 L465.73 38.45 L466.04 38.4 L466.34 38.48 L466.64 38.67 L466.95 38.96 L467.25 39.33 L467.56 39.73 L467.87 40.14 L468.17 40.5 L468.48 40.81 L468.78 41.01 L469.08 41.1 L469.39 41.06 L469.69 40.91 L470 40.64 L470.31 40.3 L470.61 39.9 L470.92 39.5 L471.22 39.11 L471.52 38.78 L471.83 38.55 L472.13 38.42 L472.44 38.41 L472.75 38.53 L473.05 38.76 L473.36 39.08 L473.66 39.46 L473.96 39.87 L474.27 40.27 L474.57 40.62 L474.88 40.89 L475.19 41.05 L475.49 41.1 L475.8 41.02 L476.1 40.83 L476.4 40.53 L476.71 40.17 L477.01 39.76 L477.32 39.36 L477.62 38.99 L477.93 38.69 L478.24 38.49 L478.54 38.4 L478.84 38.44 L479.15 38.6 L479.45 38.86 L479.76 39.21 L480.06 39.6 L480.37 40.01 L480.68 40.4 L480.98 40.72 L481.28 40.96 L481.59 41.08 L481.89 41.09 L482.2 40.97" stroke="#10e810" stroke-width="1.2" fill="none"/>
<rect x="55.6" y="18.6" width="11.1" height="7.0" fill="#e8cdc3"/>
<text x="61.2" y="24.2" font-size="5.4" fill="#383838" stroke="#383838" stroke-width="0.05" text-anchor="middle">+5V</text>
<path d="M62.6 28.9 L59.5 34.0 L65.7 34.0 Z" fill="none" stroke="#2c642c" stroke-width="1.4" stroke-linejoin="round"/>
<path d="M62.59 54.13 L62.59 60.2" stroke="#a02222" stroke-width="1.3" fill="none"/>
<path d="M62.59 66.8 L62.59 73.76" stroke="#a02222" stroke-width="1.3" fill="none"/>
<path d="M56 60.2 H69.2 L62.6 66.2 Z" fill="#cacaad" stroke="#a02222" stroke-width="1.3"/>
<path d="M55.6 66.9 L69.6 66.9" stroke="#a02222" stroke-width="1.3" fill="none"/>
<text x="73.3" y="68.4" font-size="8.2" fill="#1c1c1c" stroke="#1c1c1c" stroke-width="0.12" text-anchor="start">D11</text>
<text x="73.8" y="75.3" font-size="5.3" fill="#1c1c1c" stroke="#1c1c1c" stroke-width="0.05" text-anchor="start">1N4007</text>
<path d="M62.59 217.72 L62.59 225.42" stroke="#a02222" stroke-width="1.3" fill="none"/>
<path d="M62.59 235.82 L62.59 243.92" stroke="#a02222" stroke-width="1.3" fill="none"/>
<rect x="56.09" y="225.82" width="13.0" height="2.1" rx="0.5" fill="#a02222" stroke="#a02222" stroke-width="1.2"/>
<path d="M57.49 227.12 h1.4 l0.7 -0.6 l0.7 0.6 h1.2 l0.7 -0.6 l0.7 0.6 h1.2 l0.7 -0.6 l0.7 0.6 h1.4" stroke="#f0d8d0" stroke-width="0.5" fill="none"/>
<rect x="56.09" y="232.82" width="13.0" height="2.5" rx="0.5" fill="#f2f2dc" stroke="#a02222" stroke-width="1.05"/>
<text x="73.49" y="231.92" font-size="8.2" fill="#1c1c1c" stroke="#1c1c1c" stroke-width="0.12" text-anchor="start">C1</text>
<text x="73.89" y="238.52" font-size="5.0" fill="#1c1c1c" stroke="#1c1c1c" stroke-width="0.05" text-anchor="start">1uF</text>
<path d="M141.12 302.79 L141.12 310.49" stroke="#a02222" stroke-width="1.3" fill="none"/>
<path d="M141.12 320.89 L141.12 328.99" stroke="#a02222" stroke-width="1.3" fill="none"/>
<rect x="134.62" y="310.89" width="13.0" height="2.1" rx="0.5" fill="#a02222" stroke="#a02222" stroke-width="1.2"/>
<path d="M136.02 312.19 h1.4 l0.7 -0.6 l0.7 0.6 h1.2 l0.7 -0.6 l0.7 0.6 h1.2 l0.7 -0.6 l0.7 0.6 h1.4" stroke="#f0d8d0" stroke-width="0.5" fill="none"/>
<rect x="134.62" y="317.89" width="13.0" height="2.5" rx="0.5" fill="#f2f2dc" stroke="#a02222" stroke-width="1.05"/>
<text x="152.02" y="316.99" font-size="8.2" fill="#1c1c1c" stroke="#1c1c1c" stroke-width="0.12" text-anchor="start">C2</text>
<text x="152.42" y="323.59" font-size="5.0" fill="#1c1c1c" stroke="#1c1c1c" stroke-width="0.05" text-anchor="start">1uF</text>
<path d="M141.12 217.73 L141.12 227.1" stroke="#a02222" stroke-width="1.3" fill="none"/>
<path d="M141.12 247.4 L141.12 257" stroke="#a02222" stroke-width="1.3" fill="none"/>
<path d="M128.03 237.36 H134.3 V233.2 H136.4" stroke="#a02222" stroke-width="1.2" fill="none"/>
<path d="M135.6 231.4 L138 233.2 L135.6 235" stroke="#a02222" stroke-width="1.1" fill="none"/>
<rect x="138.2" y="227.1" width="5.8" height="20.3" fill="#cacaad" stroke="#a02222" stroke-width="1.3"/>
<path d="M140.4 234.2 q1.6 0.4 1.2 1.8 q-0.4 1 0.2 2 q0.3 1.2 -1 2" stroke="#d04040" stroke-width="0.7" fill="none"/>
<text x="147.8" y="231.5" font-size="8.2" fill="#1c1c1c" stroke="#1c1c1c" stroke-width="0.12" text-anchor="start">RV1</text>
<text x="147.7" y="238.9" font-size="5.3" fill="#1c1c1c" stroke="#1c1c1c" stroke-width="0.05" text-anchor="start">50K</text>
<circle cx="148.9" cy="230.3" r="2.8" fill="#c41414"/>
<circle cx="148.9" cy="230.3" r="1.5" fill="#3c0404"/>
<circle cx="148.9" cy="245" r="2.8" fill="#c41414"/>
<circle cx="148.9" cy="245" r="1.5" fill="#3c0404"/>
<path d="M16.78 204.64 L16.78 211.3" stroke="#a02222" stroke-width="1.3" fill="none"/>
<path d="M16.78 237.8 L16.78 243.91" stroke="#a02222" stroke-width="1.3" fill="none"/>
<circle cx="17.3" cy="224.5" r="13.1" fill="#dbd7c3" stroke="#8e2626" stroke-width="1.8"/>
<rect x="7.6" y="219.0" width="18.9" height="6.8" fill="#042a04" stroke="#30d030" stroke-width="1"/>
<path d="M9.8 222.4 H24.3" stroke="#0c4c0c" stroke-width="1.4" stroke-dasharray="2.6 0.8"/>
<text x="17.4" y="232.4" font-size="5.0" fill="#a84444" stroke="#a84444" stroke-width="0.05" text-anchor="middle">Volts</text>
<text x="13" y="208.8" font-size="5.0" fill="#b04040" stroke="#b04040" stroke-width="0.05" text-anchor="middle">+</text>
<text x="12.8" y="243.2" font-size="5.0" fill="#b04040" stroke="#b04040" stroke-width="0.05" text-anchor="middle">-</text>
<path d="M55.7 400.9 L69.5 400.9" stroke="#2c642c" stroke-width="1.5" fill="none"/>
<path d="M58.8 403.8 L66.4 403.8" stroke="#2c642c" stroke-width="1.4" fill="none"/>
<path d="M61.4 407 L63.8 407" stroke="#2c642c" stroke-width="1.3" fill="none"/>
<text x="62.4" y="416" font-size="5.3" fill="#1c1c1c" stroke="#1c1c1c" stroke-width="0.05" text-anchor="middle">GND</text>
<path d="M436.4 105.8 L439.8 102.4" stroke="#4242d0" stroke-width="1.1" fill="none"/>
<path d="M445.6 96.6 L438.9 100.4 L442 103.6 Z" stroke="#4242d0" stroke-width="1.05" fill="none" stroke-linejoin="round"/>
<text x="449" y="98.7" font-size="5.4" fill="#4242d0" stroke="#4242d0" stroke-width="0.05" text-anchor="start">R3(1)</text>
<path d="M148.4 276 L151.8 272.6" stroke="#4242d0" stroke-width="1.1" fill="none"/>
<path d="M157.6 266.8 L150.9 270.6 L154 273.8 Z" stroke="#4242d0" stroke-width="1.05" fill="none" stroke-linejoin="round"/>
<text x="161" y="268.6" font-size="5.4" fill="#4242d0" stroke="#4242d0" stroke-width="0.05" text-anchor="start">RV1(1)</text>
<path d="M357.8 184.4 L361.2 181" stroke="#4242d0" stroke-width="1.1" fill="none"/>
<path d="M367 175.2 L360.3 179 L363.4 182.2 Z" stroke="#4242d0" stroke-width="1.05" fill="none" stroke-linejoin="round"/>
<text x="370.4" y="176.7" font-size="5.4" fill="#4242d0" stroke="#4242d0" stroke-width="0.05" text-anchor="start">R13(2)</text>
<path d="M311.3 227 L315 230.9 L311.3 234.8 L307.6 230.9 Z" fill="#3c3cc8"/>
<path d="M310.2 229.2 V232.6 M312.4 229.2 V232.6 M309.6 229 H313 M309.6 232.8 H313" stroke="#d0d0f4" stroke-width="0.75"/>
</g>
</svg></body></html>
